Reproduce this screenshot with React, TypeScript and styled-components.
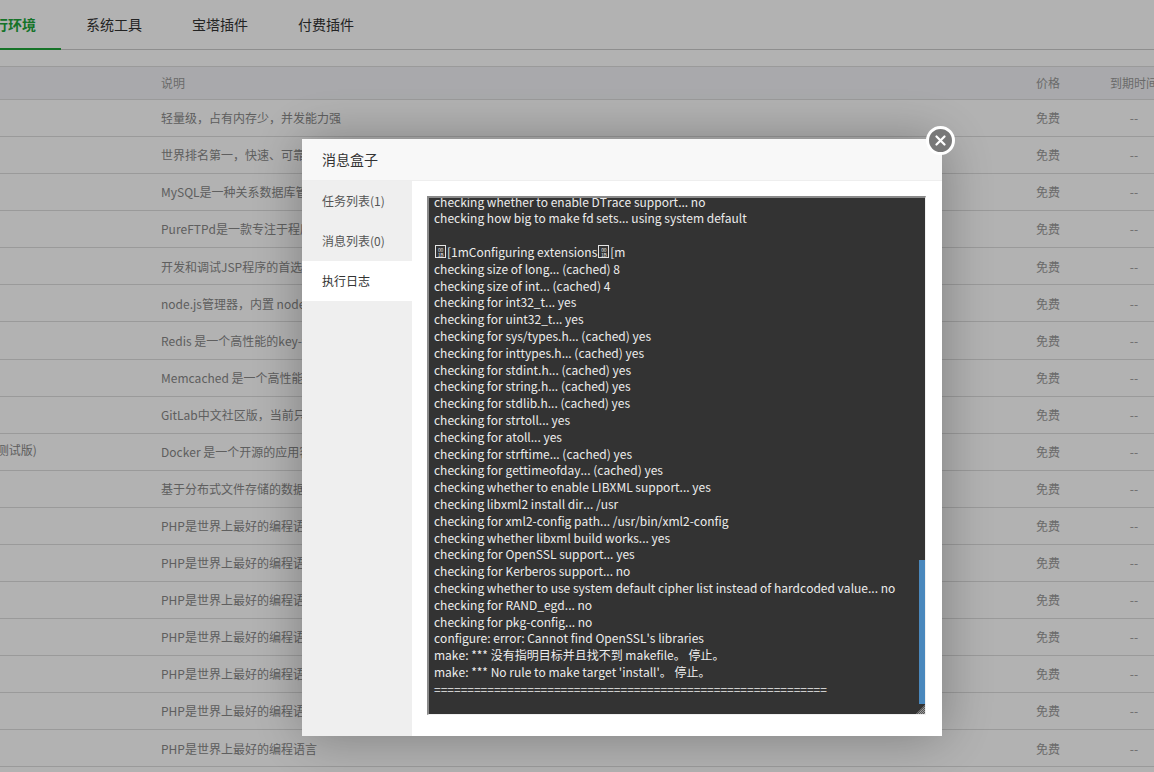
import React from 'react';
import styled, { createGlobalStyle } from 'styled-components';

const GlobalStyle = createGlobalStyle`
  html, body {
    margin: 0;
    height: 100%;
    overflow: hidden;
    background: #fff;
  }
  body {
    font-family: "Noto Sans CJK SC", "Noto Sans", sans-serif;
    font-size: 12px;
    font-kerning: none;
    color: #666;
  }
`;

const Page = styled.div`
  width: 1280px;
  margin-left: -55px;
`;

const TabBar = styled.nav`
  display: flex;
  height: 50px;
  padding-left: 10px;
  box-sizing: border-box;
  border-bottom: 1px solid #ccc;
`;

const Tab = styled.a<{ $active?: boolean }>`
  height: 50px;
  box-sizing: border-box;
  padding: 0 25px;
  line-height: 49px;
  font-size: 14px;
  color: ${props => (props.$active ? '#20a53a' : '#333')};
  font-weight: ${props => (props.$active ? 700 : 400)};
  border-bottom: ${props => (props.$active ? '2px solid #20a53a' : 'none')};
`;

const Table = styled.div`
  margin-top: 16px;
  border-top: 1px solid #ddd;
`;

const Row = styled.div<{ $head?: boolean }>`
  display: grid;
  grid-template-columns: 216px 875px 74px 48px;
  align-items: center;
  box-sizing: border-box;
  height: ${props => (props.$head ? '33px' : '37.083px')};
  padding-bottom: ${props => (props.$head ? '2px' : '0.7px')};
  color: ${props => (props.$head ? '#999' : '#888')};
  background: ${props => (props.$head ? '#f2f3f6' : 'transparent')};
  border-bottom: 1px solid #ddd;
`;

const NameCell = styled.span`
  padding: 0 0 3px 8px;
  white-space: nowrap;
`;

const Cell = styled.span`
  white-space: nowrap;
`;

const PriceCell = styled.span`
  color: #999;
  white-space: nowrap;
`;

const ExpiryCell = styled.span`
  display: flex;
  justify-content: center;
  color: #999;
  white-space: nowrap;
`;

const Shade = styled.div`
  position: fixed;
  inset: 0;
  background: rgba(0, 0, 0, 0.3);
`;

const Dialog = styled.section`
  position: fixed;
  left: 302px;
  top: 139px;
  width: 640px;
  height: 597px;
  display: flex;
  flex-direction: column;
  background: #fff;
  box-shadow: 1px 1px 50px rgba(0, 0, 0, 0.3);
`;

const DialogTitle = styled.header`
  flex: none;
  height: 42px;
  box-sizing: border-box;
  padding-left: 20px;
  line-height: 41px;
  font-size: 14px;
  color: #333;
  background: #f8f8f8;
  border-bottom: 1px solid #eee;
`;

const CloseButton = styled.button`
  position: absolute;
  right: -13px;
  top: -13px;
  width: 29px;
  height: 29px;
  box-sizing: border-box;
  padding: 0;
  display: flex;
  align-items: center;
  justify-content: center;
  border: 3px solid #fff;
  border-radius: 50%;
  background: #787878;
`;

const DialogBody = styled.div`
  flex: 1;
  display: flex;
  min-height: 0;
`;

const SideMenu = styled.ul`
  flex: none;
  width: 110px;
  margin: 0;
  padding: 0;
  list-style: none;
  background: #efefef;
`;

const SideItem = styled.li<{ $active?: boolean }>`
  height: 40px;
  padding-left: 20px;
  line-height: 40px;
  background: ${props => (props.$active ? '#fff' : 'transparent')};
  color: ${props => (props.$active ? '#333' : '#555')};
`;

const LogPane = styled.div`
  flex: 1;
  padding: 15px;
`;

const LogBox = styled.div`
  position: relative;
  width: 499px;
  height: 519px;
  box-sizing: border-box;
  overflow: hidden;
  border-width: 2px 1px 1px 2px;
  border-style: solid;
  border-color: #8a8a8a #f0f0f0 #f0f0f0 #8a8a8a;
  background: #333;
`;

const LogText = styled.pre`
  margin: -4.4px 0 0;
  padding-left: 5px;
  font: 12px/16.8px "Noto Sans CJK SC", "Noto Sans", sans-serif;
  font-kerning: none;
  color: #ececec;
  white-space: pre-wrap;
`;

// the browser's box for a control character, with its hex code inside
const HexBox = styled.span`
  display: inline-block;
  box-sizing: border-box;
  width: 11px;
  height: 13px;
  margin: 0 1px 0 1px;
  padding-top: 1px;
  border: 1px solid #e4e4e4;
  font-size: 5px;
  line-height: 5px;
  letter-spacing: -0.3px;
  text-align: center;
  white-space: normal;
  vertical-align: -1px;
  overflow: hidden;
`;

const ScrollThumb = styled.div`
  position: absolute;
  right: 0;
  top: 362px;
  width: 6px;
  height: 144px;
  background: #4a88bd;
`;

const ResizeGrip = styled.svg`
  position: absolute;
  right: 0;
  bottom: 0;
  width: 9px;
  height: 9px;
`;

const descriptions = [
  '轻量级，占有内存少，并发能力强',
  '世界排名第一，快速、可靠并支持几乎所有操作系统',
  'MySQL是一种关系数据库管理系统',
  'PureFTPd是一款专注于程序健壮和软件安全的免费FTP服务器软件',
  '开发和调试JSP程序的首选服务器',
  'node.js管理器，内置 node 与 pm2',
  'Redis 是一个高性能的key-value数据库',
  'Memcached 是一个高性能的分布式内存对象缓存系统',
  'GitLab中文社区版，当前只支持Centos6/7 64位系统',
  'Docker 是一个开源的应用容器引擎',
  '基于分布式文件存储的数据库',
  ...Array(7).fill('PHP是世界上最好的编程语言'),
];

const logHead = `checking whether to enable DTrace support... no
checking how big to make fd sets... using system default

`;

const logTail = `
checking size of long... (cached) 8
checking size of int... (cached) 4
checking for int32_t... yes
checking for uint32_t... yes
checking for sys/types.h... (cached) yes
checking for inttypes.h... (cached) yes
checking for stdint.h... (cached) yes
checking for string.h... (cached) yes
checking for stdlib.h... (cached) yes
checking for strtoll... yes
checking for atoll... yes
checking for strftime... (cached) yes
checking for gettimeofday... (cached) yes
checking whether to enable LIBXML support... yes
checking libxml2 install dir... /usr
checking for xml2-config path... /usr/bin/xml2-config
checking whether libxml build works... yes
checking for OpenSSL support... yes
checking for Kerberos support... no
checking whether to use system default cipher list instead of hardcoded value... no
checking for RAND_egd... no
checking for pkg-config... no
configure: error: Cannot find OpenSSL's libraries
make: *** 没有指明目标并且找不到 makefile。 停止。
make: *** No rule to make target 'install'。 停止。
${'='.repeat(59)}`;

const App: React.FC = () => {
  return (
    <>
      <GlobalStyle />
      <Page>
        <TabBar>
          <Tab $active>运行环境</Tab>
          <Tab>系统工具</Tab>
          <Tab>宝塔插件</Tab>
          <Tab>付费插件</Tab>
        </TabBar>
        <Table>
          <Row $head>
            <NameCell />
            <Cell>说明</Cell>
            <Cell>价格</Cell>
            <ExpiryCell>到期时间</ExpiryCell>
          </Row>
          {descriptions.map((text, i) => (
            <Row key={i}>
              <NameCell>{i === 9 ? 'Docker(测试版)' : ''}</NameCell>
              <Cell>{text}</Cell>
              <PriceCell>免费</PriceCell>
              <ExpiryCell>--</ExpiryCell>
            </Row>
          ))}
        </Table>
      </Page>
      <Shade />
      <Dialog>
        <DialogTitle>消息盒子</DialogTitle>
        <CloseButton aria-label="关闭">
          <svg width="11" height="11" viewBox="0 0 11 11">
            <path d="M1.5 1.5l8 8M9.5 1.5l-8 8" stroke="#fff" strokeWidth="2.2" strokeLinecap="round" />
          </svg>
        </CloseButton>
        <DialogBody>
          <SideMenu>
            <SideItem>任务列表(1)</SideItem>
            <SideItem>消息列表(0)</SideItem>
            <SideItem $active>执行日志</SideItem>
          </SideMenu>
          <LogPane>
            <LogBox>
              <LogText>
                {logHead}
                <HexBox>00 1B</HexBox>[1mConfiguring extensions<HexBox>00 1B</HexBox>[m
                {logTail}
              </LogText>
              <ScrollThumb />
              <ResizeGrip viewBox="0 0 9 9">
                <defs>
                  <pattern id="grip" width="2" height="2" patternUnits="userSpaceOnUse">
                    <rect width="1" height="1" fill="#9a9a9a" />
                    <rect x="1" y="1" width="1" height="1" fill="#9a9a9a" />
                    <rect x="1" width="1" height="1" fill="#555" />
                    <rect y="1" width="1" height="1" fill="#555" />
                  </pattern>
                </defs>
                <path d="M9 0v9H0z" fill="url(#grip)" />
              </ResizeGrip>
            </LogBox>
          </LogPane>
        </DialogBody>
      </Dialog>
    </>
  );
};

export default App;
